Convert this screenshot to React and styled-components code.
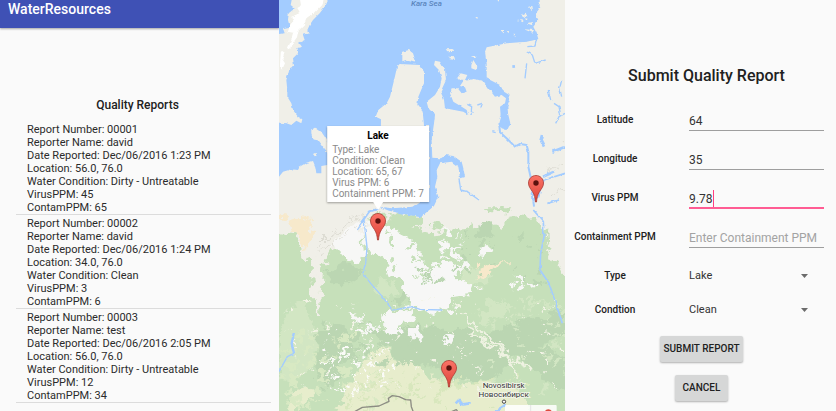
import React from "react";
import styled, { createGlobalStyle } from "styled-components";

const GlobalStyle = createGlobalStyle`
  *, *::before, *::after { box-sizing: border-box; }
  body {
    margin: 0;
    background: #fafafa;
    color: #212121;
    font-family: Roboto, "Noto Sans", sans-serif;
  }
`;

const Page = styled.main`
  display: grid;
  grid-template-columns: 279fr 286fr 271fr;
  min-height: 100vh;
`;

const Panel = styled.section`
  min-width: 0;
  background: #fafafa;
`;

/* ---------- Reports list ---------- */

const AppBar = styled.header`
  height: 28px;
  padding-left: 8px;
  background: #3f51b5;
  box-shadow: 0 1px 2px rgba(0, 0, 0, 0.35);
  color: #fff;
`;

const AppTitle = styled.h1`
  margin: 0;
  font-size: 14px;
  font-weight: 500;
  line-height: 18px;
`;

const ReportsTitle = styled.h2`
  margin: 68px 4px 0 0;
  font-size: 12px;
  font-weight: 500;
  line-height: 18px;
  text-align: center;
`;

const ReportList = styled.ul`
  margin: 7px 8px 0 16px;
  padding: 0;
  list-style: none;
`;

const ReportItem = styled.li`
  padding: 2px 0 0 11px;
  border-bottom: 1px solid #dcdcdc;
  font-size: 11px;
  line-height: 13px;
  color: #2b2b2b;
`;

const ReportLine = styled.div`
  white-space: nowrap;
`;

/* ---------- Map ---------- */

const MapPanel = styled.section`
  position: relative;
  min-width: 0;
  overflow: hidden;
  background: #f0efe8;
`;

const MapDrawing = styled.svg`
  position: absolute;
  inset: 0;
  width: 100%;
  height: 100%;
`;

const Marker = styled.button`
  position: absolute;
  left: ${(p) => p.$x}%;
  top: ${(p) => p.$y}%;
  width: 18px;
  height: 30px;
  padding: 0;
  border: 0;
  background: none;
  transform: translate(-50%, -100%);
  cursor: pointer;

  svg { display: block; width: 100%; height: 100%; }
`;

const InfoWindow = styled.article`
  position: absolute;
  left: 34.6%;
  top: 49.2%;
  padding: 4px 5px 3px;
  background: #fff;
  box-shadow: 0 1px 2px rgba(0, 0, 0, 0.35);
  color: #8a8a8a;
  font-size: 10px;
  line-height: 11px;
  white-space: nowrap;
  transform: translate(-50%, -100%);

  &::after {
    content: "";
    position: absolute;
    left: 50%;
    top: 100%;
    border: 5px solid transparent;
    border-top: 8px solid #fff;
    border-bottom: 0;
    transform: translateX(-50%);
  }
`;

const InfoTitle = styled.h3`
  margin: 0 0 3px;
  color: #000;
  font-size: 10px;
  font-weight: 700;
  line-height: 11px;
  text-align: center;
`;

/* ---------- Form ---------- */

const Form = styled.form`
  display: flex;
  flex-direction: column;
  padding: 64px 12px 9px 0;
`;

const FormTitle = styled.h2`
  margin: 0 0 12px 24px;
  font-size: 16px;
  font-weight: 500;
  line-height: 24px;
  text-align: center;
`;

const Row = styled.div`
  display: grid;
  grid-template-columns: 100px 1fr;
  column-gap: 24px;
  height: ${(p) => (p.$compact ? 34 : 39)}px;
`;

const Label = styled.label`
  font-size: 10px;
  font-weight: 500;
  line-height: ${(p) => (p.$compact ? 34 : 39)}px;
  text-align: center;
  white-space: nowrap;
`;

const Control = styled.div`
  position: relative;
  min-width: 0;
`;

const TextInput = styled.input`
  display: block;
  width: 100%;
  height: 31px;
  padding: 12px 0 0;
  border: 0;
  border-bottom: ${(p) => (p.$active ? "2px solid #ff5c93" : "1px solid #9e9e9e")};
  border-radius: 0;
  outline: 0;
  background: transparent;
  color: #333;
  font: 400 12px/18px Roboto, "Noto Sans", sans-serif;

  &::placeholder { color: #a3a3a3; opacity: 1; }
`;

const Caret = styled.span`
  position: absolute;
  left: 24px;
  top: 12px;
  width: 1px;
  height: 17px;
  background: #ff4081;
`;

const Selects = styled.div`
  margin-top: 3px;
`;

const Select = styled.select`
  display: block;
  width: 100%;
  height: 34px;
  padding: 0;
  border: 0;
  appearance: none;
  background: transparent;
  color: #333;
  font: 400 11px/18px Roboto, "Noto Sans", sans-serif;
`;

const Arrow = styled.svg`
  position: absolute;
  right: 16px;
  top: 15px;
  width: 7px;
  height: 4px;
  fill: #6b6b6b;
  pointer-events: none;
`;

const Actions = styled.div`
  display: flex;
  flex-direction: column;
  align-items: center;
  gap: 13px;
  margin: 9px 0 0 14px;
`;

const Button = styled.button`
  height: 26px;
  padding: 0 ${(p) => (p.$wide ? 4 : 8)}px;
  border: 0;
  border-radius: 2px;
  background: #d6d7d7;
  box-shadow: 0 1px 2px rgba(0, 0, 0, 0.3);
  color: #212121;
  font: 500 10px/26px Roboto, "Noto Sans", sans-serif;
  text-transform: uppercase;
`;

const reports = [
  ["00001", "david", "Dec/06/2016 1:23 PM", "56.0, 76.0", "Dirty - Untreatable", "45", "65"],
  ["00002", "david", "Dec/06/2016 1:24 PM", "34.0, 76.0", "Clean", "3", "6"],
  ["00003", "test", "Dec/06/2016 2:05 PM", "56.0, 76.0", "Dirty - Untreatable", "12", "34"],
];

const fields = [
  "Report Number",
  "Reporter Name",
  "Date Reported",
  "Location",
  "Water Condition",
  "VirusPPM",
  "ContamPPM",
];

/* Irregular vegetation patches scattered in a box, repeatable by seed. */
function patches(x, y, w, h, count, size, seed) {
  let s = seed;
  const rnd = () => {
    s = (s * 16807) % 2147483647;
    return s / 2147483647;
  };
  for (let i = 0; i < 5; i++) rnd();
  let d = "";
  for (let i = 0; i < count; i++) {
    const cx = x + rnd() * w;
    const cy = y + rnd() * h;
    const r = size * (0.35 + rnd());
    for (let k = 0; k < 7; k++) {
      const a = (k / 7) * Math.PI * 2;
      const q = r * (0.4 + rnd() * 0.8);
      d += `${k ? "L" : "M"}${Math.round(cx + Math.cos(a) * q * 1.3)} ${Math.round(cy + Math.sin(a) * q)}`;
    }
    d += "Z";
  }
  return d;
}

function Terrain() {
  return (
    <MapDrawing viewBox="0 0 858 1233" preserveAspectRatio="xMidYMid slice" aria-hidden="true">
      <defs>
        <filter id="ragged" x="-5%" y="-5%" width="110%" height="110%">
          <feTurbulence type="fractalNoise" baseFrequency="0.035" numOctaves="4" seed="4" />
          <feDisplacementMap in="SourceGraphic" scale="50" xChannelSelector="R" yChannelSelector="G" />
        </filter>
        <filter id="coast" x="-5%" y="-5%" width="110%" height="110%">
          <feTurbulence type="fractalNoise" baseFrequency="0.06" numOctaves="3" seed="9" />
          <feDisplacementMap in="SourceGraphic" scale="9" xChannelSelector="R" yChannelSelector="G" />
        </filter>
      </defs>
      <rect width="858" height="1233" fill="#f0efe8" />

      <g filter="url(#ragged)">
        <path fill="#c6e0ba" d="M-30 690 50 700 75 760 95 800 105 900 118 940 130 800 160 750 200 730 240 770 255 700 285 640 310 650 330 650 400 680 423 690 460 700 560 690 575 660 610 690 650 680 700 650 765 645 800 690 810 760 845 820 900 860 900 1270-30 1270Z" />
        <path fill="#c6e0ba" d="M340 640 430 645 440 670 400 680 340 675ZM615 625 700 625 690 637 620 637Z" />
        <path fill="#bbd6b2" d="M145 815 200 790 250 815 230 850 160 850ZM115 990 180 970 220 1000 215 1050 240 1080 190 1090 180 1140 140 1170 115 1130ZM350 890 385 860 390 900 360 915ZM280 1000 370 980 430 980 500 990 560 985 640 1040 690 1085 640 1140 520 1140 470 1100 360 1090ZM600 680 640 660 640 710 590 715Z" />
        <path fill="#bbd6b2" d="M610 1010 700 970 780 960 858 925 858 1010 790 1035 858 1075 858 1170 800 1150 770 1110 700 1070Z" />
        <path fill="#d2e6c3" d="M30 920 70 900 115 1000 100 1100 40 1150 0 1140 0 1040ZM300 840 350 850 340 900 290 880ZM620 920 680 910 670 960 600 970ZM560 790 640 830 620 850 560 860Z" />
        <path fill="#e7edcc" d="M190 1190 230 1130 250 1080 310 1040 340 1080 430 1100 460 1140 540 1155 620 1145 720 1170 760 1240 160 1260ZM50 1170 100 1160 110 1180 40 1240 20 1240Z" />
        <path fill="#f7f7f6" d="M255 680 310 670 350 690 390 710 440 790 500 800 560 780 570 800 545 830 590 855 570 885 520 890 500 930 460 945 430 925 400 920 375 870 355 830 330 825 305 760 285 760 260 740ZM160 730 200 690 235 660 250 700 255 770 225 785 170 755ZM310 950 350 930 400 935 405 960 360 965 350 1010 320 990ZM390 990 410 985 430 1010 425 1030 400 1015ZM480 1005 525 1010 515 1035 490 1020ZM500 930 535 925 530 945 505 945ZM600 745 640 735 625 765 605 775Z" />
        <path fill="#c6e0ba" d="M285 760 300 755 305 795 285 795ZM325 700 345 720 345 750 330 735Z" />
        <path fill="#f7e9cb" d="M0 640 20 640 25 665 0 665ZM45 660 75 650 100 660 90 740 75 745 65 710 35 690ZM595 800 620 790 690 790 650 805 600 840Z" />
        <path fill="#f7f7f6" d={patches(220, 920, 180, 80, 40, 8, 41)} />
        <path fill="#fbfbf8" d={patches(130, 1000, 220, 180, 70, 6, 77)} />
        <path fill="#f3f4e6" d={patches(20, 900, 838, 280, 130, 4, 91)} />
        <path fill="#d8e9c3" d={patches(0, 1000, 300, 230, 70, 9, 61)} />
        <path fill="#d2e6c3" d={patches(560, 900, 298, 280, 60, 9, 15)} />
        <path fill="#bbd6b2" d={patches(420, 700, 380, 150, 35, 7, 19)} />
        <path fill="#bbd6b2" d={patches(120, 960, 400, 140, 50, 8, 23)} />
        <path fill="#f7f7f6" d={patches(490, 690, 60, 120, 26, 9, 28)} />
        <path fill="#f7f7f6" d={patches(690, 830, 70, 30, 12, 8, 12)} />
        <path fill="#c6e0ba" d={patches(330, 680, 220, 150, 34, 9, 54)} />
        <path fill="#d8e7bd" d={patches(180, 1120, 600, 110, 60, 8, 29)} />
        <path fill="none" stroke="#f0efe8" strokeWidth="10" d="M112 760 122 850 118 950" />
        <path fill="none" stroke="#eff2e2" strokeWidth="7" d="M545 940 580 980 640 1020 690 1070 710 1130M560 985 690 1075 760 1110" />
      </g>

      <g fill="none" stroke="#dddcd3" strokeWidth="3" filter="url(#ragged)">
        <path d="M115 740 150 705 210 665 260 635M125 755 170 725 230 680M140 720 200 670M820 455 858 430M800 520 858 490M810 590 858 570" />
      </g>

      <g filter="url(#coast)">
        <path fill="#a3ccff" d="M-20-20H782L782 20 768 40 778 60 763 80 773 100 778 117 743 125 683 130 623 142 618 155 623 190 623 235 663 255 675 275 691 285 693 300 685 320 688 345 694 370 685 390 668 385 658 370 665 345 663 320 678 310 681 295 668 285 648 290 628 265 613 242 583 237 553 243 543 258 558 262 563 275 548 280 536 265 518 265 513 280 523 305 548 320 563 330 568 345 553 335 498 325 495 300 485 275 501 240 498 210 483 185 468 182 465 195 480 210 488 235 483 260 468 285 443 305 448 325 468 345 465 370 458 420 460 473 483 475 498 465 523 468 548 485 553 505 558 530 543 535 538 500 518 485 483 490 473 510 475 530 468 560 478 590 465 618 425 652 375 642 330 632 300 620 340 625 400 620 430 600 450 570 450 375H435L431 335 415 315 418 290 435 250 435 215 423 195 362 192 354 200 350 220 343 250 333 290 323 310 298 330 290 350 306 358 304 450 145 495 127 498 127 520 112 520 109 500 102 483 82 488 62 500 57 510 37 508 12 515 0 530-20 530Z" />
        <g fill="#f0efe8">
          <path d="M42-20H155L137 20 122 40 102 60 92 75 85 90 89 100 72 105 77 120 60 128 69 140 52 145 57 160 42 175 45 198 32 205 27 225 22 240 25 270 25 290 37 310 42 330 57 350 70 358 67 370 52 362 37 375 22 370-20 366-20 105 17 100 12 85 32 80 27 60 29 40 47 25 35 15Z" />
          <path d="M370 155 390 150 402 160 410 185 390 180 370 187ZM97 390 107 383 130 400 140 415 150 430 150 465 130 440 115 420 103 418 97 400ZM100 460 115 460 110 472ZM577 195 583 180 595 200 591 210 577 205ZM532 238 545 220 565 225 558 240ZM510 170 525 172 528 180 512 178ZM500 148 520 147 528 152 505 154ZM575 168 592 168 590 174ZM666 93 675 93 675 100ZM683 93 690 93 689 100ZM728 45 740 38 744 48 732 52ZM743 70 758 66 760 76ZM735 88 765 90 760 98ZM748 20 760 18 762 30ZM650-5 660-5 660 5ZM589 51 596 51 595 58ZM703 101 711 102 709 108ZM722 60 735 62 730 67ZM712 60 718 58 718 66ZM738 55 746 56 742 62Z" />
        </g>
        <path fill="#fff" d="M60-20H138L130 15 108 38 82 58 74 77 58 92 54 112 42 128 37 145 25 148 37 120 43 98 25 95 35 72 46 60 36 51 61 40 52 24 66 16ZM6 150 17 158 10 177 18 190 8 212 3 190Z" />
      </g>

      <g fill="none" stroke="#a3ccff" strokeWidth="4" strokeLinejoin="round" filter="url(#coast)">
        <path strokeWidth="6" d="M661 375 663 397 685 417 708 440 723 432 743 435 748 455 748 500 758 545 765 620" />
        <path d="M745 120 773 117 768 138 745 140M743 155 760 165 768 190 800 180M743 190 738 235M848 240 842 265 848 290M808 270 815 300M858 340 840 350 830 370M825 310 840 320 845 345M540 535 545 570 565 575 600 600M670 350 680 365 678 390M565 313 578 320 577 333M580 335 575 342M595 315 610 310 606 322M640 395 650 398" />
        <path strokeWidth="8" d="M789 405 785 420 795 440M700 200 708 199M792 548 773 570M792 530 825 515M820 455 855 442" />
        <path strokeWidth="5" d="M765 600 778 590 795 540 858 520M805 610 840 600" />
        <path d="M235 690 255 660 260 705 264 740 260 790 252 820 275 850 310 890 340 930 400 920 423 928 490 930" />
        <path d="M763 630 793 665 795 710 785 760 783 810 810 850 830 910 850 970" strokeWidth="5" />
        <path d="M45 1000 38 1030 45 1060M245 670 270 635 300 625" strokeWidth="7" />
        <path d="M45 1060 25 1070 0 1115" />
        <path d="M530 1210 540 1200 550 1213 575 1210M640 1240 680 1215" strokeWidth="8" />
      </g>

      <path fill="none" stroke="#8c8c83" strokeWidth="4" strokeLinejoin="round" d="M225 1236 250 1222 300 1218 330 1204 328 1195 340 1187 360 1190 380 1199 395 1200 397 1220 403 1236M423 1236 515 1236 532 1229 540 1240" />

      <rect x="678" y="1215" width="155" height="30" rx="3" fill="#fff" fillOpacity="0.85" />
      <path d="M755 1215V1233" stroke="#e4e4e4" strokeWidth="3" />
      <circle cx="808" cy="1239" r="11" fill="#dd4b3e" />

      <text x="396" y="17" fill="#5a85bd" fontFamily="Roboto" fontSize="24" fontStyle="italic" fontWeight="500">Kara Sea</text>
      <g fill="#333" stroke="#f5f8ec" strokeWidth="5" paintOrder="stroke" fontFamily="Roboto" fontSize="24" textAnchor="middle">
        <text x="674" y="1163">Novosibirsk</text>
        <text x="674" y="1190">Новосибирск</text>
      </g>
      <circle cx="675" cy="1205" r="5" fill="#fff" stroke="#444" strokeWidth="3" />
    </MapDrawing>
  );
}

function Pin({ x, y, name }) {
  return (
    <Marker type="button" $x={x} $y={y} aria-label={name}>
      <svg viewBox="0 0 18 30">
        <defs>
          <linearGradient id="pinRed" x1="0" y1="0" x2="0" y2="1">
            <stop offset="0" stopColor="#fb7367" />
            <stop offset="1" stopColor="#dc4439" />
          </linearGradient>
        </defs>
        <path
          d="M9 1.5C4.8 1.5 1.5 4.8 1.5 9c0 3.6 2 5.6 3.9 8.5C7.500 20.800 8.200 24 8.500 28h1c.3-4 1-7.200 3.100-10.500C14.500 14.600 16.500 12.600 16.500 9c0-4.200-3.300-7.500-7.500-7.500Z"
          fill="url(#pinRed)"
          stroke="#a93b32"
          strokeWidth="0.8"
        />
        <circle cx="9" cy="9" r="2.7" fill="#5b120e" />
      </svg>
    </Marker>
  );
}

function Field({ id, label, active, ...rest }) {
  return (
    <Row>
      <Label htmlFor={id}>{label}</Label>
      <Control>
        <TextInput id={id} $active={active} {...rest} />
        {active && <Caret />}
      </Control>
    </Row>
  );
}

function SelectField({ id, label, options }) {
  return (
    <Row $compact>
      <Label $compact htmlFor={id}>{label}</Label>
      <Control>
        <Select id={id}>
          {options.map((o) => (
            <option key={o}>{o}</option>
          ))}
        </Select>
        <Arrow viewBox="0 0 7 4" aria-hidden="true">
          <path d="M0 0h7L3.500 4Z" />
        </Arrow>
      </Control>
    </Row>
  );
}

export default function App() {
  return (
    <>
      <GlobalStyle />
      <Page>
        <Panel>
          <AppBar>
            <AppTitle>WaterResources</AppTitle>
          </AppBar>
          <ReportsTitle>Quality Reports</ReportsTitle>
          <ReportList>
            {reports.map((report) => (
              <ReportItem key={report[0]}>
                {fields.map((field, i) => (
                  <ReportLine key={field}>{`${field}: ${report[i]}`}</ReportLine>
                ))}
              </ReportItem>
            ))}
          </ReportList>
        </Panel>

        <MapPanel aria-label="Map">
          <Terrain />
          <Pin x={90} y={49.6} name="Water source near the Yenisei" />
          <Pin x={34.6} y={59} name="Lake" />
          <Pin x={59.6} y={94.6} name="Water source near Novosibirsk" />
          <InfoWindow>
            <InfoTitle>Lake</InfoTitle>
            <div>Type: Lake</div>
            <div>Condition: Clean</div>
            <div>Location: 65, 67</div>
            <div>Virus PPM: 6</div>
            <div>Containment PPM: 7</div>
          </InfoWindow>
        </MapPanel>

        <Panel>
          <Form onSubmit={(e) => e.preventDefault()}>
            <FormTitle>Submit Quality Report</FormTitle>
            <Field id="latitude" label="Latitude" defaultValue="64" />
            <Field id="longitude" label="Longitude" defaultValue="35" />
            <Field id="virus" label="Virus PPM" defaultValue="9.78" active />
            <Field id="containment" label="Containment PPM" placeholder="Enter Containment PPM" />
            <Selects>
              <SelectField id="type" label="Type" options={["Lake", "Stream", "Well"]} />
              <SelectField id="condition" label="Condtion" options={["Clean", "Dirty"]} />
            </Selects>
            <Actions>
              <Button type="submit" $wide>Submit Report</Button>
              <Button type="button">Cancel</Button>
            </Actions>
          </Form>
        </Panel>
      </Page>
    </>
  );
}
